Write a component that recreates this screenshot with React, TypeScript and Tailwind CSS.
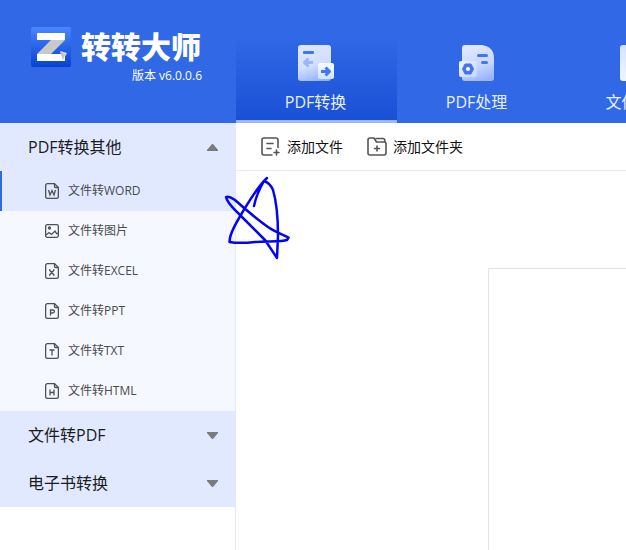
import React from "react";

const latin = "font-['Open_Sans','Noto_Sans_CJK_SC',sans-serif]";

function Logo() {
  return (
    <svg width="40" height="40" viewBox="0 0 40 40" aria-hidden="true">
      <defs>
        <linearGradient id="logoBg" x1="0" y1="0" x2="0" y2="1">
          <stop offset="0" stopColor="#4a86ff" />
          <stop offset="1" stopColor="#0443cf" />
        </linearGradient>
      </defs>
      <rect width="40" height="40" rx="2" fill="url(#logoBg)" />
      <path d="M20 13H34L20 27H6Z" fill="#c9c9c9" />
      <path d="M6 6H34V13H6ZM6 27H34V34H6Z" fill="#fff" />
      <path d="M29 24L36 26L32 33Z" fill="#e0e0e0" />
      <path d="M29 24L32 33L34 27Z" fill="#c4c4c4" />
    </svg>
  );
}

function ConvertIcon() {
  return (
    <svg width="36" height="36" viewBox="0 0 36 36" aria-hidden="true">
      <defs>
        <linearGradient id="cvPage" x1="0.3" y1="0" x2="0.6" y2="1">
          <stop offset="0" stopColor="#dce6ff" />
          <stop offset="0.55" stopColor="#d3dfff" />
          <stop offset="1" stopColor="#96b2ff" />
        </linearGradient>
        <linearGradient id="cvCard" x1="0" y1="0" x2="0" y2="1">
          <stop offset="0" stopColor="#f8fbff" />
          <stop offset="1" stopColor="#cfe2ff" />
        </linearGradient>
      </defs>
      <rect width="33" height="36" rx="3" fill="url(#cvPage)" />
      <rect x="5" y="6" width="11" height="3" rx="1" fill="#4375ed" />
      <path d="M15 17.500H8M10.500 13.500L6.500 17.500L10.500 21.500" fill="none" stroke="#9bb5fb" strokeWidth="3" strokeLinejoin="round" />
      <rect x="20" y="18" width="16" height="16" rx="2" fill="url(#cvCard)" />
      <path d="M23 26.500H31M27.500 22.500L31.500 26.500L27.500 30.500" fill="none" stroke="#4375ed" strokeWidth="3" strokeLinejoin="round" />
    </svg>
  );
}

function ProcessIcon() {
  return (
    <svg width="36" height="36" viewBox="0 0 36 36" aria-hidden="true">
      <defs>
        <linearGradient id="prPage" x1="0.3" y1="0" x2="0.6" y2="1">
          <stop offset="0" stopColor="#e0e9ff" />
          <stop offset="0.6" stopColor="#c8d7ff" />
          <stop offset="1" stopColor="#98b4ff" />
        </linearGradient>
        <linearGradient id="prCard" x1="0" y1="0" x2="1" y2="1">
          <stop offset="0" stopColor="#eef4ff" />
          <stop offset="1" stopColor="#c4d6ff" />
        </linearGradient>
      </defs>
      <path d="M6 0H23Q35 2 35 13V33Q35 36 32 36H6Q3 36 3 33V3Q3 0 6 0Z" fill="url(#prPage)" />
      <rect x="18" y="9" width="11" height="3" rx="1.500" fill="#4375ed" />
      <rect x="22" y="16" width="7" height="3" rx="1.500" fill="#4375ed" />
      <rect x="0" y="16" width="18" height="16" rx="2" fill="url(#prCard)" />
      <path d="M6 19H12L14.500 24L12 29H6L3.500 24Z" fill="#4375ed" stroke="#4375ed" strokeLinejoin="round" />
      <circle cx="9" cy="24" r="2" fill="#fff" />
    </svg>
  );
}

function FilesIcon() {
  return (
    <svg width="36" height="36" viewBox="0 0 36 36" aria-hidden="true">
      <defs>
        <linearGradient id="flPage" x1="0" y1="0" x2="0" y2="1">
          <stop offset="0" stopColor="#d5e1ff" />
          <stop offset="1" stopColor="#f1f5ff" />
        </linearGradient>
      </defs>
      <rect width="32" height="36" rx="3" fill="url(#flPage)" />
    </svg>
  );
}

const glyphs: Record<string, string> = {
  W: "M3.500 7L5 12L7 7.500L9 12L10.500 7",
  X: "M4.500 7L9 12M9 7L4.500 12M4 7H5.500M8 7H9.500M4 12H5.500M8 12H9.500",
  P: "M5.500 12.500V7H7.500Q9.500 7 9.500 8.500Q9.500 10 7.500 10H5.500",
  T: "M4.500 7H9.500M7 7V12.500",
  H: "M5 6.500V12.500M9 6.500V12.500M5 9.500H9",
};

function DocIcon({ kind }: { kind: string }) {
  if (kind === "image") {
    return (
      <svg width="14" height="16" viewBox="0 0 14 16" fill="none" stroke="#505050" strokeWidth="1.300" aria-hidden="true">
        <rect x="0.650" y="1.650" width="12.700" height="12.700" rx="1.500" />
        <circle cx="4.500" cy="5" r="1" />
        <path d="M1 12L4 9.500L6.500 11.500L10 8L11.500 10.500H13" />
      </svg>
    );
  }
  return (
    <svg width="14" height="16" viewBox="0 0 14 16" fill="none" stroke="#505050" strokeWidth="1.300" aria-hidden="true">
      <path d="M9.500 0.650H2.500Q0.650 0.650 0.650 2.500V13.500Q0.650 15.350 2.500 15.350H11.500Q13.350 15.350 13.350 13.500V4.500Z" />
      <path d="M9.500 0.650V3.500Q9.500 4.500 10.500 4.500H13.350" />
      <path d={glyphs[kind]} />
    </svg>
  );
}

function Caret({ up }: { up?: boolean }) {
  return (
    <svg width="11" height="7" viewBox="0 0 11 7" aria-hidden="true">
      <path d={up ? "M5 0H6L11 6V7H0V6Z" : "M0 0H11V1L6 7H5L0 1Z"} fill="#7a7a7a" />
    </svg>
  );
}

function GroupHeader({ label, open }: { label: string; open?: boolean }) {
  return (
    <button type="button" aria-expanded={!!open} className="flex h-12 w-full items-center justify-between bg-[#e0e9ff] pr-[17px] pl-7 text-base text-[#1c1c1c]">
      <span>{label}</span>
      <Caret up={open} />
    </button>
  );
}

const tabs = [
  { label: "PDF转换", icon: <ConvertIcon />, active: true },
  { label: "PDF处理", icon: <ProcessIcon />, active: false },
  { label: "文件处理", icon: <FilesIcon />, active: false },
];

const items = [
  { label: "文件转WORD", kind: "W" },
  { label: "文件转图片", kind: "image" },
  { label: "文件转EXCEL", kind: "X" },
  { label: "文件转PPT", kind: "P" },
  { label: "文件转TXT", kind: "T" },
  { label: "文件转HTML", kind: "H" },
];

function AddFileIcon() {
  return (
    <svg width="20" height="20" viewBox="0 0 20 20" fill="none" stroke="#555" strokeWidth="1.600" strokeLinecap="round" aria-hidden="true">
      <path d="M18 10.500V3Q18 1 16 1H4Q2 1 2 3V16Q2 18 4 18H12" />
      <path d="M7 6.500H13M7 11.500H11M14 15.500H19M16.500 13V18" />
    </svg>
  );
}

function AddFolderIcon() {
  return (
    <svg width="20" height="20" viewBox="0 0 20 20" fill="none" stroke="#555" strokeWidth="1.600" strokeLinecap="round" strokeLinejoin="round" aria-hidden="true">
      <path d="M1 16V3Q1 1 3 1H7L9.500 5H17Q19 5 19 7V16Q19 18 17 18H3Q1 18 1 16Z" />
      <path d="M9 1.500H16Q18 1.500 18 4.500M7.500 11.500H12.500M10 9V14" />
    </svg>
  );
}

function Scribble() {
  return (
    <svg className="pointer-events-none absolute top-[170px] left-[220px]" width="76" height="96" viewBox="220 170 76 96" fill="none" stroke="#0404f4" strokeWidth="2.500" strokeLinecap="round" strokeLinejoin="round" aria-hidden="true">
      <path d="M267 178C258 186 250 200 242 213C236 223 231 232 230 238L229.500 242C238 243.500 246 243 255 242C266 241 282 242 287 240L288.500 237.500C282 234 275 232 268 227C255 218 244 208 235 200C232 198 228 196 226 197C227 203 234 209 240 215L265 240L277 258L278 236C278 220 276 200 273 190C271 185 267 182 264 181C260 188 256 196 254 206" />
    </svg>
  );
}

export default function App() {
  return (
    <div className={`relative flex h-screen flex-col overflow-hidden bg-white ${latin}`}>
      <header className="flex h-[123px] shrink-0 bg-[#3168e6] text-white">
        <div className="w-[236px] shrink-0 pt-[27px] pl-[31px]">
          <div className="flex h-10 items-center gap-2.5">
            <Logo />
            <h1 className="text-[30px] leading-10 font-black">转转大师</h1>
          </div>
          <p className="pr-[34px] text-right text-xs leading-[18px]">版本 v6.0.0.6</p>
        </div>
        <nav className="flex min-w-0 flex-1 overflow-hidden">
          {tabs.map((t) => (
            <button
              key={t.label}
              type="button"
              className={`flex w-[161px] shrink-0 flex-col items-center gap-[9px] border-b-3 pt-[45px] pr-0.5 text-base leading-6 text-[#e8efff] ${
                t.active ? "border-[#9db7ff] bg-linear-to-b from-[#3168e6] from-30% to-[#1a50d5]" : "border-transparent"
              }`}
            >
              {t.icon}
              <span>{t.label}</span>
            </button>
          ))}
        </nav>
      </header>

      <div className="flex min-h-0 flex-1">
        <aside className="w-[236px] shrink-0 border-r border-[#e0e9ff]">
          <GroupHeader label="PDF转换其他" open />
          <ul>
            {items.map((it, i) => (
              <li key={it.label}>
                <button
                  type="button"
                  className={`flex h-10 w-full items-center gap-[9px] border-l-2 pl-[43px] text-xs text-[#4a4a4a] ${
                    i === 0 ? "border-[#3168e6] bg-[#e0e9ff]" : "border-transparent bg-[#f5f8ff]"
                  }`}
                >
                  <DocIcon kind={it.kind} />
                  <span>{it.label}</span>
                </button>
              </li>
            ))}
          </ul>
          <GroupHeader label="文件转PDF" />
          <GroupHeader label="电子书转换" />
        </aside>

        <main className="flex min-w-0 flex-1 flex-col overflow-hidden">
          <div className="flex h-12 shrink-0 items-center gap-6 border-b border-[#e0e9ff] px-6 text-sm text-[#111]">
            <button type="button" className="flex items-center gap-[7px]">
              <AddFileIcon />
              <span>添加文件</span>
            </button>
            <button type="button" className="flex items-center gap-1.5">
              <AddFolderIcon />
              <span>添加文件夹</span>
            </button>
          </div>
          <section className="mt-[97px] ml-[252px] flex-1 border-t border-l border-[#e3e3e3]" aria-label="文件列表" />
        </main>
      </div>
      <Scribble />
    </div>
  );
}
